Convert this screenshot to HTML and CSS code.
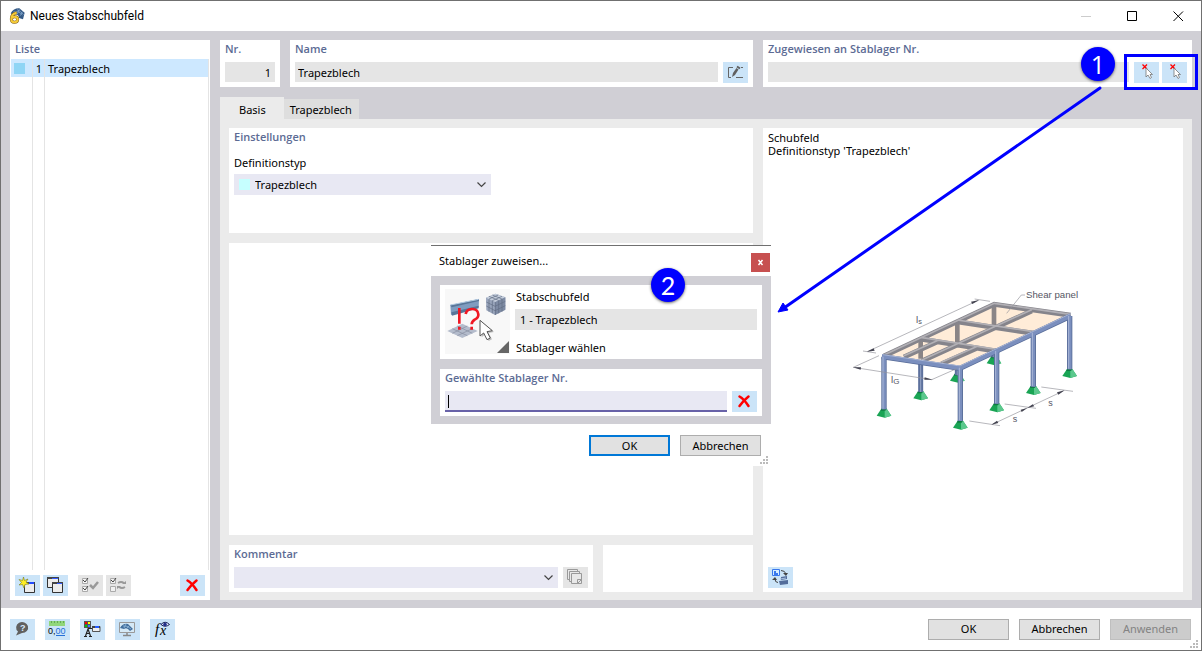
FILE: index.html
```html
<!DOCTYPE html>
<html lang="de">
<head>
<meta charset="utf-8">
<title>Neues Stabschubfeld</title>
<link rel="stylesheet" href="styles.css">
</head>
<body>
<div class="window">
  <header class="titlebar">
    <svg class="app-icon" viewBox="0 0 48 48" width="16" height="16" aria-hidden="true">
      <path d="M5 16Q14 0 31 1L47 14L42 34L30 30Q30 16 8 18Z" fill="#355a86"/>
      <path d="M12 13Q26 5 40 21M24 5Q34 8 44 20M31 4L25 18M40 11L34 23" stroke="#8fb4d8" stroke-width="2" fill="none"/>
      <path d="M23 14Q7 17 7 33Q7 43 16 43Q26 43 26 34Q26 26 17 26Q11 26 8 31" fill="none" stroke="#80601c" stroke-width="9"/>
      <path d="M23 14Q7 17 7 33Q7 43 16 43Q26 43 26 34Q26 26 17 26Q11 26 8 31" fill="none" stroke="#f5cb37" stroke-width="6"/>
    </svg>
    <h1>Neues Stabschubfeld</h1>
    <div class="win-controls">
      <button type="button" aria-label="Minimieren" disabled><svg viewBox="0 0 11 11" width="11" height="11"><path d="M0 5.500H10" stroke="#ccc"/></svg></button>
      <button type="button" aria-label="Maximieren"><svg viewBox="0 0 11 11" width="11" height="11"><path d="M.5.500H9.500V9.500H.5Z" fill="none" stroke="#000"/></svg></button>
      <button type="button" aria-label="Schließen"><svg viewBox="0 0 11 11" width="11" height="11"><path d="M.5.500L10 10M10 .5L.5 10" stroke="#000"/></svg></button>
    </div>
  </header>

  <main class="workspace">
    <section class="panel list-panel">
      <h2>Liste</h2>
      <div class="list">
        <table>
          <tbody><tr><td class="col-color"><span class="swatch"></span></td><td class="col-nr">1</td><td class="col-name">Trapezblech</td></tr>
          <tr class="filler"><td></td><td></td><td></td></tr></tbody>
        </table>
      </div>
      <div class="toolbar">
        <button type="button" class="tool" aria-label="Neu"><svg viewBox="0 0 25 21" width="25" height="21"><path d="M9.500 7.500H19.500V17.500H9.500Z" fill="#ececec" stroke="#333"/><path d="M9 7H20V9H9Z" fill="#444"/><path d="M14 7H19V9H14Z" fill="#234cff"/><path d="M8.500 2L9.500 5.500L13 4L11 7L14 9L10 9.500L9 13L7.500 9.500L4 10L6.500 7.500L4 4.500L7.500 5.500Z" fill="#ffee23" stroke="#777a20" stroke-width=".6"/></svg></button>
        <button type="button" class="tool" aria-label="Kopieren"><svg viewBox="0 0 25 21" width="25" height="21"><g fill="#ececec" stroke="#333"><path d="M4.500 2.500H15.500V12.500H4.500Z"/><path d="M9.500 7.500H19.500V17.500H9.500Z"/></g><path d="M4 2H16V4H4ZM9 7H20V9H9Z" fill="#444"/><path d="M9 3H15V4H9ZM14 8H19V9H14Z" fill="#3459ff"/></svg></button>
        <button type="button" class="tool off apart" aria-label="Alle auswählen" disabled><svg viewBox="0 0 25 21" width="25" height="21"><path d="M4.500 3.500H9.500V8.500H4.500ZM4.500 11.500H9.500V16.500H4.500Z" fill="#f5f5f5" stroke="#aaa"/><path d="M5 5L7 7L10 3M5 13L7 15L10 11" fill="none" stroke="#444"/><path d="M12 10L15 13L20 7" fill="none" stroke="#999" stroke-width="2.500"/></svg></button>
        <button type="button" class="tool off" aria-label="Auswahl umkehren" disabled><svg viewBox="0 0 25 21" width="25" height="21"><path d="M4.500 3.500H9.500V8.500H4.500ZM4.500 11.500H9.500V16.500H4.500Z" fill="#f0f0f0" stroke="#aaa"/><path d="M5 5L7 7L10 3" fill="none" stroke="#444"/><path d="M12 8Q15 6 18 8M19 12Q16 14 13 12" fill="none" stroke="#999" stroke-width="1.800"/><path d="M16 9H20V6ZM11 14V11H15Z" fill="#999"/></svg></button>
        <button type="button" class="tool last" aria-label="Löschen"><svg viewBox="0 0 25 21" width="25" height="21"><path d="M7.500 5.500Q12 8 16.500 15M16.500 5.500Q12 9 7.500 15" fill="none" stroke="#f00" stroke-width="2.500" stroke-linecap="round"/></svg></button>
      </div>
    </section>

    <div class="editor">
      <div class="head-row">
        <div class="head-left">
          <section class="panel nr-panel"><label class="heading" for="nr">Nr.</label><input id="nr" class="field right" value="1" readonly></section>
          <section class="panel grow"><label class="heading" for="name">Name</label>
            <div class="line"><input id="name" class="field" value="Trapezblech"><button type="button" class="tool" aria-label="Name bearbeiten"><svg viewBox="0 0 25 21" width="25" height="21"><path d="M10 5.500H5.500V15.500H8M13 15.500H20M18 5.500H20" fill="none" stroke="#666"/><path d="M9 15L10 11L13.500 6L15.500 7.500L12 13Z" fill="#606060"/><path d="M14 4.500L17 6.500" stroke="#606060" stroke-width="2"/></svg></button></div>
          </section>
        </div>
        <section class="panel"><label class="heading" for="assigned">Zugewiesen an Stablager Nr.</label>
          <div class="line"><input id="assigned" class="field" readonly>
            <div class="pair"><button type="button" class="tool" aria-label="Auswählen"><svg viewBox="0 0 25 21" width="25" height="21"><path d="M8.500 2.500L13 7M13 2.500L8.500 7" stroke="#f00" stroke-width="1.300"/><path d="M12 6V15L14 13L16 16.500L17.500 15.500L16 12.500H18.500Z" fill="#fff" stroke="#777" stroke-width=".8"/></svg></button>
            <button type="button" class="tool" aria-label="Auswahl aufheben"><svg viewBox="0 0 25 21" width="25" height="21"><path d="M8.500 2.500L13 7M13 2.500L8.500 7" stroke="#f00" stroke-width="1.300"/><path d="M12 6V15L14 13L16 16.500L17.500 15.500L16 12.500H18.500Z" fill="#fff" stroke="#777" stroke-width=".8"/></svg></button></div>
          </div>
        </section>
      </div>

      <div class="tabs" role="tablist"><button type="button" role="tab" aria-selected="true" class="tab active">Basis</button><button type="button" role="tab" aria-selected="false" class="tab">Trapezblech</button></div>

      <div class="page">
        <div class="page-main">
          <section class="panel settings">
            <h2>Einstellungen</h2>
            <label class="caption" for="deftype">Definitionstyp</label>
            <div class="combo deftype"><span class="combo-swatch"></span><select id="deftype"><option>Trapezblech</option></select><svg class="chevron" viewBox="0 0 9 6" width="9" height="6"><path d="M.5.500L4.500 4.500L8.500.5" fill="none" stroke="#444" stroke-width="1.200"/></svg></div>
          </section>
          <section class="panel blank"></section>
          <div class="comment-row">
            <section class="panel"><label class="heading" for="comment">Kommentar</label>
              <div class="line"><div class="combo"><select id="comment"><option></option></select><svg class="chevron" viewBox="0 0 9 6" width="9" height="6"><path d="M.5.500L4.500 4.500L8.500.5" fill="none" stroke="#444" stroke-width="1.200"/></svg></div>
              <button type="button" class="tool off" aria-label="Kommentare" disabled><svg viewBox="0 0 25 21" width="25" height="21"><g fill="#e8e8e8" stroke="#999"><path d="M4.500 2.500H14.500V12.500H4.500Z"/><path d="M6.500 4.500H16.500V14.500H6.500Z"/><path d="M8.500 6.500H18.500V16.500H8.500Z"/><path d="M14.500 16V12.500H18M15 16L18 13"/></g></svg></button></div>
            </section>
            <section class="panel"></section>
          </div>
        </div>
        <section class="panel preview">
          <p>Schubfeld<br>Definitionstyp 'Trapezblech'</p>
          <svg class="drawing" viewBox="0 0 780 480" width="260" height="160" role="img" aria-label="Shear panel">
            <defs><g id="foot"><path d="M-8 -14H8L22 7L2 13L-22 7Z" fill="#19a454"/><path d="M2 -14H8L22 7L2 13Z" fill="#5bc88d"/><path d="M-8 -14H8L4 -8H-10Z" fill="#107b42"/></g></defs>
            <use href="#foot" x="132" y="400"/><use href="#foot" x="242" y="348"/><use href="#foot" x="352" y="295"/><use href="#foot" x="462" y="243"/><use href="#foot" x="361" y="436"/><use href="#foot" x="470" y="384"/><use href="#foot" x="580" y="332"/><use href="#foot" x="689" y="281"/>
            <g stroke="#5d719d" stroke-width="15"><path d="M242 174V336M352 122V286M462 74V232"/></g>
            <g stroke="#96a4c6" stroke-width="3"><path d="M242 174V336M352 122V286M462 74V232"/></g>
            <path d="M132 228L463 73L692 106L360 264Z" fill="#ffecd8"/>
            <g stroke="#8a8587" stroke-width="14"><path d="M242 174V236M352 122V190M462 74V142"/></g>
            <g stroke="#85848b" stroke-width="15" fill="none"><path d="M132 228L463 73L692 106M242 177L470 214M352 125L580 160M246 243L575 93M304 252L412 204M192 231L296 184"/></g>
            <g stroke="#b2b0b5" stroke-width="5" fill="none"><path d="M132 225L463 70L692 103M242 172L470 208M352 120L580 155M246 240L575 89M304 247L412 199M192 227L296 180"/></g>
            <g stroke="#596d99" stroke-width="16" fill="none"><path d="M132 230V388M361 263V423M470 213V371M580 158V320M689 108V268"/><path d="M126 230L360 265L692 108"/></g>
            <g stroke="#7b8fbe" stroke-width="11" fill="none"><path d="M132 230V388M361 263V423M470 213V371M580 158V320M689 108V268"/><path d="M126 230L360 265L692 108"/></g>
            <g stroke="#aab7d7" stroke-width="3" fill="none"><path d="M129 230V386M358 263V420M467 213V369M577 158V318M686 108V266M128 224L360 258L692 101"/></g>
            <g stroke="#92929a" stroke-width="2" fill="none"><path d="M555 45H544L500 100M84 214L415 61M69 213L108 219M404 57L450 64M40 262L275 299M117 227L40 262M350 266L275 299M388 423L480 437M494 372L588 385M604 321L699 334M457 433L670 333"/></g>
            <g fill="#444451"><path d="M80 215L101 205L104 212ZM418 60L393 65L397 72ZM39 262L63 262L62 269ZM278 299L254 292L253 299ZM454 434L471 422L475 429ZM562 384L542 389L545 396ZM562 384L578 373L583 379ZM674 331L651 337L655 344Z"/></g>
            <g class="drawing-text"><text x="558" y="54" font-size="29">Shear panel</text><text x="228" y="129" font-size="29">l<tspan font-size="22" dy="4">s</tspan></text><text x="153" y="308" font-size="29">l<tspan font-size="24" dy="5">G</tspan></text><text x="518" y="425" font-size="27">s</text><text x="625" y="377" font-size="27">s</text></g>
          </svg>
          <button type="button" class="tool" aria-label="Ansicht wechseln"><svg viewBox="0 0 25 21" width="25" height="21"><path d="M4.500 2.500H11.500V8.500H4.500Z" fill="#d5edff" stroke="#3978ed"/><path d="M6 4H8V6H10V8H6Z" fill="#3978ed"/><path d="M13 3.500Q17 3.500 18 7M7 12Q7 15.500 10 15.500" fill="none" stroke="#444"/><path d="M15 6H20L18 9ZM4 13L7 10L9 13Z" fill="#444"/><path d="M13 10L19 9V12L13 13ZM11 14L20 13V17L12 18Z" fill="#536d9b"/><path d="M12 12L18 11" stroke="#a8bfe0"/></svg></button>
        </section>
      </div>
    </div>
  </main>

  <footer class="footer">
    <div class="footer-tools">
      <button type="button" class="tool" aria-label="Hilfe"><svg viewBox="0 0 25 21" width="25" height="21"><path d="M6 16.500L8 12.500A6 5.500 0 1 1 12 14Z" fill="#606060"/><text x="10" y="12" font-size="9" class="help-mark">?</text></svg></button>
      <button type="button" class="tool" aria-label="Einheiten"><svg viewBox="0 0 25 21" width="25" height="21"><path d="M4 2H20V7H4Z" fill="#91d67b"/><path d="M6.500 2V4M9.500 2V4M12.500 2V4M15.500 2V4M18.500 2V4" stroke="#65aa55"/><text x="3" y="15" font-size="9" class="digits">0,<tspan fill="#246fd7">00</tspan></text><path d="M11 16.500H20" stroke="#246fd7"/></svg></button>
      <button type="button" class="tool" aria-label="Anzeige"><svg viewBox="0 0 25 21" width="25" height="21"><path d="M4 2H11V9H4Z" fill="#555"/><path d="M5 3H7V5H5Z" fill="red"/><path d="M8 3H10V5H8Z" fill="#ff0"/><path d="M5 6H7V8H5Z" fill="#0c0"/><path d="M8 6H10V8H8Z" fill="#37f"/><path d="M4 17.500H7M9 17.500H12M5.500 17L8 10L10.500 17M6 14.500H10" fill="none" stroke="#222" stroke-width="1.200"/><path d="M8 9.500H12" stroke="#222"/><path d="M12.500 7.500H20V12.500H12.500Z" fill="#eee" stroke="#555"/><path d="M12 7H20V9H12Z" fill="#444"/><path d="M15 7H19V9H15Z" fill="#245cff"/></svg></button>
      <button type="button" class="tool" aria-label="Ansicht"><svg viewBox="0 0 25 21" width="25" height="21"><path d="M4.500 3.500H19.500V13.500H4.500Z" fill="#d5e9f6" stroke="#999"/><path d="M12 14V17M8 16.500H16" stroke="#888" stroke-width="1.500"/><path d="M5 9Q8 4 13 5L18 10L15 12Q12 8 9 10Z" fill="#436f9e"/><path d="M8 7Q12 6 16 10M11 5L9 9M14 7L12 9" fill="none" stroke="#9cc3e1" stroke-width=".7"/></svg></button>
      <button type="button" class="tool" aria-label="Formel"><svg viewBox="0 0 25 21" width="25" height="21"><text x="5" y="15" font-size="15" class="formula">f</text><text x="10" y="16" font-size="14" class="formula">x</text><path d="M11 5.500Q15 1 19.500 5.500Q15 9 11 5.500Z" fill="#e6eeff" stroke="#172056"/><circle cx="15" cy="5.500" r="1.800" fill="#24308c"/></svg></button>
    </div>
    <div class="actions"><button type="button" class="btn">OK</button><button type="button" class="btn">Abbrechen</button><button type="button" class="btn" disabled>Anwenden</button></div>
    <svg class="grip" viewBox="0 0 8 8" width="8" height="8"><path d="M6 0H8V2H6ZM3 3H5V5H3ZM6 3H8V5H6ZM0 6H2V8H0ZM3 6H5V8H3ZM6 6H8V8H6Z" fill="#bbb"/></svg>
  </footer>

  <div class="dialog" role="dialog" aria-labelledby="dlg-title">
    <header class="dialog-title"><h2 id="dlg-title">Stablager zuweisen...</h2><button type="button" class="dialog-close" aria-label="Schließen"><svg viewBox="0 0 7 7" width="7" height="7"><path d="M1.500 1L5.500 6M5.500 1L1.500 6" stroke="#fff" stroke-width="1.500"/></svg></button></header>
    <div class="dialog-body">
      <section class="panel pick">
        <svg class="pick-icon" viewBox="0 0 195 195" width="65" height="65" aria-hidden="true">
          <path d="M0 0H195V195H0Z" fill="#f8f8f8"/>
          <path d="M16 48L102 30L101 55L18 78Z" fill="#7f9cc0"/><path d="M16 48L102 30V36L20 55ZM19 70L101 50V58L21 80Z" fill="#587699"/><path d="M16 48L101 31" stroke="#b8cee4" stroke-width="3"/>
          <path d="M7 126L52 104L98 126L52 147Z" fill="#b4bccc"/><path d="M22 119L67 140M37 111L82 133M22 133L67 111M37 140L82 119" stroke="#858d9e" stroke-width="2"/>
          <path d="M123 26L151 14L181 25V62L150 78L124 64Z" fill="#98a4bb"/><path d="M123 26L151 14L181 25L151 39Z" fill="#c5cedc"/><path d="M151 39L181 25V62L150 78Z" fill="#7d8aa3"/><path d="M132 31V68M142 35V73M161 34V73M171 30V68M124 39L150 52L181 37M124 51L150 65L181 50M132 22L160 34M142 18L171 30M132 30L160 18M142 35L171 22M151 39V78" fill="none" stroke="#606c83" stroke-width="2"/>
          <path d="M43 57V104M43 113V122" stroke="#f01824" stroke-width="8"/><path d="M62 75Q65 60 81 60Q99 60 100 76Q101 86 89 92Q80 98 80 106M80 113V122" fill="none" stroke="#f01824" stroke-width="8"/>
          <path d="M110 98V145L121 136L131 156L141 151L131 132L147 129Z" fill="#777" opacity=".45"/><path d="M105 94V141L116 132L126 152L136 147L126 128L142 125Z" fill="#fff" stroke="#555" stroke-width="3"/>
          <path d="M192 156V192H156Z" fill="#666"/>
        </svg>
        <div class="pick-text"><label for="panelnr">Stabschubfeld</label><input id="panelnr" class="field" value="1 - Trapezblech" readonly><p>Stablager wählen</p></div>
      </section>
      <section class="panel chosen"><label class="heading" for="chosen">Gewählte Stablager Nr.</label>
        <div class="line"><div class="entry"><input id="chosen" class="field active-field"><span class="caret"></span></div><button type="button" class="tool" aria-label="Auswahl löschen"><svg viewBox="0 0 25 21" width="25" height="21"><path d="M7.500 5.500Q12 8 16.500 15M16.500 5.500Q12 9 7.500 15" fill="none" stroke="#f00" stroke-width="2.500" stroke-linecap="round"/></svg></button></div>
      </section>
    </div>
    <div class="dialog-actions"><button type="button" class="btn primary">OK</button><button type="button" class="btn">Abbrechen</button></div>
    <svg class="grip" viewBox="0 0 8 8" width="8" height="8"><path d="M6 0H8V2H6ZM3 3H5V5H3ZM6 3H8V5H6ZM0 6H2V8H0ZM3 6H5V8H3ZM6 6H8V8H6Z" fill="#bbb"/></svg>
  </div>

  <svg class="arrow" viewBox="0 0 326 230" width="326" height="230" aria-hidden="true"><path d="M323 2L7 222" stroke="#00f" stroke-width="3" stroke-linecap="round"/><path d="M1 226L6 217L11 224Z" fill="#00f" stroke="#00f"/></svg>
  <div class="highlight"></div>
  <div class="step step-one">1</div>
  <div class="step step-two">2</div>
</div>
</body>
</html>
```

FILE: styles.css
```css
* { box-sizing: border-box; }
body, h1, h2, p { margin: 0; }
body, button, input, select {
  font-family: "Noto Sans", "Open Sans", sans-serif;
  font-size: 11px;
  line-height: 14px;
  color: #000;
}
button, input, select { border: 0; border-radius: 0; padding: 0; outline: 0; }
svg { display: block; }
.window {
  position: relative;
  display: flex;
  flex-direction: column;
  min-height: 100vh;
  border: 1px solid #707070;
  background: #fff;
}
.titlebar { display: flex; align-items: center; height: 30px; padding-left: 8px; }
.titlebar h1 { margin-left: 5px; font-family: Roboto, "Open Sans", sans-serif; font-size: 12px; line-height: 16px; font-weight: 400; }
.win-controls { display: flex; margin-left: auto; }
.win-controls button { display: flex; width: 46px; height: 30px; align-items: center; justify-content: center; background: none; }
.workspace { display: flex; flex: 1; gap: 10px; padding: 9px 9px 8px; background: #d0cfd5; }
.panel { padding: 2px 5px 4px; background: #fff; min-width: 0; }
h2, .heading { display: block; font-family: "Open Sans", "Noto Sans", sans-serif; font-size: 11px; line-height: 14px; font-weight: 600; color: #5c6b94; }
.field { display: block; width: 100%; min-width: 0; height: 20px; padding: 0 3px; background: #e5e5e5; }
.right { text-align: right; padding-right: 4px; }
.tool { display: block; flex: none; width: 25px; height: 21px; background: #cbe4f8; }
.tool.off { background: #e5e5e5; }
.line { display: flex; gap: 5px; margin-top: 6px; }
.pair { display: flex; gap: 3px; }

.list-panel { display: flex; flex-direction: column; width: 200px; flex: none; padding: 2px 1px 4px; }
.list-panel h2 { padding-left: 4px; }
.list { display: flex; flex: 1; margin-top: 3px; }
.list table { width: 100%; height: 100%; border-collapse: separate; border-spacing: 0; }
.list td { height: 18px; padding: 2px 0 0; border-right: 1px solid #e4e4e4; background: #cde8ff; }
.list .filler td { height: auto; background: #fff; }
.list .col-color { width: 22px; padding: 0; }
.col-nr { width: 12px; text-align: right; }
.list .col-nr { padding-right: 2px; }
.list .col-name { padding-left: 3px; }
.swatch { display: block; width: 11px; height: 11px; margin-left: 3px; background: #8fd5f5; }
.toolbar { display: flex; gap: 3px; margin-top: 5px; padding: 0 4px; }
.apart { margin-left: 7px; }
.last { margin-left: auto; }

.editor { display: flex; flex: 1; flex-direction: column; min-width: 0; }
.head-row { display: grid; grid-template-columns: minmax(0, 533fr) minmax(0, 429fr); gap: 10px; }
.head-left { display: flex; gap: 10px; }
.nr-panel { width: 60px; }
.nr-panel .field { margin-top: 6px; }
.grow { flex: 1; }
.tabs { display: flex; align-items: flex-end; height: 22px; margin-top: 10px; }
.tab { height: 20px; padding: 2px 7px 0 6px; background: #dedede; }
.tab.active { height: 22px; padding: 4px 18px 0 19px; background: #ebebeb; }
.page { display: grid; flex: 1; grid-template-columns: minmax(0, 524fr) minmax(0, 420fr); gap: 10px; padding: 9px 9px 8px; background: #ebebeb; }
.page-main { display: flex; flex-direction: column; gap: 10px; }
.settings { height: 105px; }
.caption { display: block; margin: 12px 0 4px; }
.combo { position: relative; flex: 1; }
.combo select { display: block; width: 100%; height: 21px; padding-left: 5px; background: #e8e8f3; appearance: none; }
.deftype { width: 50%; }
.combo.deftype select { padding-left: 21px; }
.combo-swatch { position: absolute; top: 5px; left: 5px; width: 11px; height: 11px; background: #c6ffff; }
.chevron { position: absolute; top: 8px; right: 5px; }
.blank { flex: 1; }
.comment-row { display: grid; grid-template-columns: minmax(0, 364fr) minmax(0, 150fr); gap: 10px; }
.preview { display: flex; flex-direction: column; justify-content: space-between; padding-top: 3px; }
.preview p { line-height: 13px; }
.drawing { margin: 0 0 4px 72px; }
.drawing-text { font-family: "Liberation Sans", sans-serif; fill: #555563; }

.footer { position: relative; display: flex; align-items: center; justify-content: space-between; height: 42px; padding: 0 10px 0 9px; }
.footer-tools { display: flex; gap: 10px; }
.actions, .dialog-actions { display: flex; gap: 10px; }
.btn { width: 81px; height: 21px; border: 1px solid #adadad; background: #e1e1e1; }
.btn:disabled { border-color: #bfbfbf; background: #ccc; color: #838383; }
.btn.primary { border: 2px solid #0078d7; }
.grip { position: absolute; right: 3px; bottom: 2px; }
.help-mark { font-family: "Liberation Sans", sans-serif; font-weight: 700; fill: #d8eaff; }
.digits { font-family: "Liberation Sans", sans-serif; }
.formula { font-family: "Liberation Serif", serif; font-style: italic; }

.dialog { position: absolute; top: 244px; left: 430px; width: 340px; border-top: 1px solid #707070; background: #fff; }
.dialog-title { display: flex; align-items: center; justify-content: space-between; height: 30px; padding: 2px 1px 0 8px; }
.dialog-title h2 { padding-bottom: 2px; font-family: "Noto Sans", sans-serif; color: #000; font-weight: 400; }
.dialog-close { display: flex; align-items: center; justify-content: center; width: 19px; height: 19px; background: #c75050; }
.dialog-body { display: flex; flex-direction: column; gap: 10px; padding: 9px 9px 8px; background: #d0cfd5; }
.pick { display: flex; gap: 5px; padding: 4px 5px; }
.pick-icon { flex: none; }
.pick-text { flex: 1; padding-top: 1px; }
.pick-text label { display: block; padding-left: 1px; }
.pick-text .field { height: 21px; margin: 5px 0 11px; padding-left: 5px; }
.pick-text p { padding-left: 1px; }
.entry { position: relative; flex: 1; }
.active-field { height: 21px; border-bottom: 2px solid #6862a8; background: #e8e8f3; }
.caret { position: absolute; top: 4px; left: 3px; width: 1px; height: 13px; background: #000; }
.dialog-actions { justify-content: flex-end; padding: 11px 10px 10px; }

.arrow { position: absolute; top: 85px; left: 776px; }
.highlight { position: absolute; top: 53px; right: 3px; width: 74px; height: 36px; border: 3px solid #00f; }
.step {
  position: absolute;
  width: 34px;
  height: 34px;
  border-radius: 50%;
  background: #00f;
  box-shadow: 0 1px 3px #666;
  color: #fff;
  font: 25px/34px Lato, "Open Sans", sans-serif;
  text-align: center;
}
.step-one { top: 46px; left: 1080px; font-family: "Open Sans", sans-serif; }
.step-two { top: 267px; left: 650px; }
```
